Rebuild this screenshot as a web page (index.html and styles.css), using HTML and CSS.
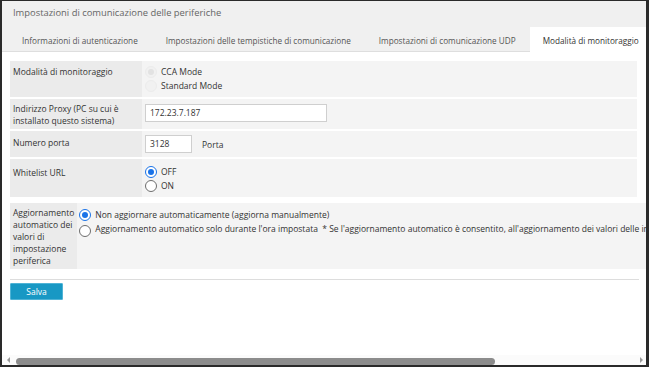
FILE: index.html
```html
<!DOCTYPE html>
<html lang="it">
<head>
<meta charset="utf-8">
<title>Impostazioni di comunicazione delle periferiche</title>
<link rel="stylesheet" href="styles.css">
</head>
<body>
<div class="frame">
  <div class="header">
    <div class="title">Impostazioni di comunicazione delle periferiche</div>
    <div class="tabs">
      <div class="tab">Informazioni di autenticazione</div>
      <div class="tab">Impostazioni delle tempistiche di comunicazione</div>
      <div class="tab">Impostazioni di comunicazione UDP</div>
      <div class="tab active">Modalità di monitoraggio</div>
    </div>
  </div>
  <div class="content">
    <table class="form">
      <tr class="r1">
        <td class="label">Modalità di monitoraggio</td>
        <td class="value">
          <label class="opt disabled"><span class="radio dis-checked"></span>CCA Mode</label>
          <label class="opt disabled"><span class="radio dis"></span>Standard Mode</label>
        </td>
      </tr>
      <tr class="r2">
        <td class="label lines">Indirizzo Proxy (PC su cui è<br>installato questo sistema)</td>
        <td class="value"><div class="field"><span class="input wide">172.23.7.187</span></div></td>
      </tr>
      <tr class="r3">
        <td class="label">Numero porta</td>
        <td class="value"><div class="field"><span class="input narrow">3128</span><span class="unit">Porta</span></div></td>
      </tr>
      <tr class="r4">
        <td class="label">Whitelist URL</td>
        <td class="value">
          <label class="opt"><span class="radio checked"></span>OFF</label>
          <label class="opt"><span class="radio"></span>ON</label>
        </td>
      </tr>
    </table>
    <table class="form2">
      <tr>
        <td class="label">Aggiornamento automatico dei valori di impostazione periferica</td>
        <td class="value">
          <label class="opt"><span class="radio checked"></span>Non aggiornare automaticamente (aggiorna manualmente)</label>
          <label class="opt"><span class="radio low"></span>Aggiornamento automatico solo durante l'ora impostata&nbsp;&nbsp;* Se l'aggiornamento automatico è consentito, all'aggiornamento dei valori delle impostazioni della periferica</label>
        </td>
      </tr>
    </table>
    <div class="sep"></div>
    <button class="save">Salva</button>
  </div>
  <div class="hscroll">
    <span class="arrow left"></span>
    <div class="track"><div class="thumb"></div></div>
    <span class="arrow right"></span>
  </div>
</div>
</body>
</html>
```

FILE: styles.css
```css
html, body {
  margin: 0;
  padding: 0;
  background: #fff;
}

body {
  font-family: "Segoe UI", "Open Sans", "Noto Sans", sans-serif;
  color: #333;
}

.frame {
  width: 649px;
  height: 367px;
  box-sizing: border-box;
  border-style: solid;
  border-color: #2a2a2a;
  border-width: 1px 3px 2px 2px;
  display: flex;
  flex-direction: column;
  overflow: hidden;
  background: #fff;
}

.header {
  background: #f0f0f0;
  height: 51px;
  flex: none;
  box-sizing: border-box;
  border-bottom: 1px solid #dedede;
  display: flex;
  flex-direction: column;
}

.title {
  height: 26px;
  line-height: 24px;
  padding-left: 11px;
  font-size: 9.4px;
  color: #666;
  white-space: nowrap;
}

.tabs {
  display: flex;
  padding-left: 6px;
  white-space: nowrap;
}

.tab {
  flex: none;
  padding: 0 14px;
  height: 24px;
  line-height: 27px;
  font-size: 8.2px;
  color: #555;
}

.tab.active {
  background: #fff;
  color: #333;
  height: 25px;
  margin-bottom: -1px;
  padding: 0 13px;
}

.content {
  flex: 1;
  min-height: 0;
  padding: 7px 0 0 8px;
  overflow: hidden;
  font-size: 8.5px;
}

table {
  border-collapse: separate;
  border-spacing: 0 2px;
  font-size: 8.5px;
  color: #333;
}

td {
  vertical-align: top;
}

.form {
  width: 627px;
}

.form .label {
  width: 126px;
  background: #ebebeb;
  padding: 4px 3px 4px 3px;
  line-height: 13px;
}

.form .label.lines {
  line-height: 12px;
  padding-bottom: 2px;
}

.form .value {
  background: #f4f4f4;
  padding: 4px 3px;
}

.field {
  display: flex;
  align-items: center;
  height: 18px;
}

.r2 .value {
  padding-top: 5px;
  padding-bottom: 5px;
}

.r3 .label {
  padding-top: 5px;
}

.r3 .value {
  padding-top: 4px;
  padding-bottom: 4px;
}

.r4 .label {
  padding-top: 7px;
}

.r4 .value {
  padding-top: 6px;
  padding-bottom: 4px;
}

.opt {
  display: flex;
  align-items: center;
  height: 14px;
  line-height: 14px;
  white-space: nowrap;
}

.radio {
  flex: none;
  width: 10px;
  height: 10px;
  border-radius: 50%;
  border: 1px solid #6d6d6d;
  background: #fff;
  margin: 0 4px 0 0;
  box-sizing: content-box;
  position: relative;
}

.radio.checked {
  border-color: #1a73e8;
}

.radio.checked::after {
  content: "";
  position: absolute;
  left: 2px;
  top: 2px;
  width: 6px;
  height: 6px;
  border-radius: 50%;
  background: #1a73e8;
}

.radio.dis,
.radio.dis-checked {
  border-color: #ececec;
  background: #f1f1f1;
}

.radio.dis-checked::after {
  content: "";
  position: absolute;
  left: 2px;
  top: 2px;
  width: 6px;
  height: 6px;
  border-radius: 50%;
  background: #e2e2e2;
}

.radio.low {
  margin-top: 3px;
}

.input {
  flex: none;
  display: block;
  box-sizing: border-box;
  height: 18px;
  line-height: 16px;
  border: 1px solid #cfcfcf;
  background: #fff;
  padding: 0 4px;
}

.input.wide {
  width: 182px;
}

.input.narrow {
  width: 47px;
}

.unit {
  margin-left: 10px;
}

.form2 {
  margin-top: 2px;
}

.form2 .label {
  width: 61px;
  background: #ebebeb;
  padding: 4px 3px 2px 3px;
  line-height: 12px;
}

.form2 .value {
  background: #f4f4f4;
  padding: 5px 20px 4px 2px;
}

.sep {
  width: 629px;
  height: 1px;
  background: #dddddd;
  margin-top: 8px;
}

.save {
  display: block;
  margin: 3px 0 0 0;
  width: 53px;
  height: 17px;
  padding: 0;
  border: 1px solid #4fb3d6;
  border-radius: 1px;
  background: #1898c4;
  color: #fff;
  font-family: inherit;
  font-size: 8.5px;
  line-height: 15px;
}

.hscroll {
  flex: none;
  height: 10px;
  display: flex;
  align-items: center;
  background: #fbfbfb;
}

.arrow {
  flex: none;
  width: 0;
  height: 0;
  border-top: 3px solid transparent;
  border-bottom: 3px solid transparent;
}

.arrow.left {
  margin-left: 5px;
  border-right: 3px solid #9a9a9a;
}

.arrow.right {
  margin-right: 3px;
  border-left: 3px solid #9a9a9a;
}

.track {
  flex: 1;
  height: 7px;
  padding: 0 6px;
  margin-top: 2px;
}

.thumb {
  width: 479px;
  height: 7px;
  border-radius: 4px;
  background: #8c8c8c;
}
```
